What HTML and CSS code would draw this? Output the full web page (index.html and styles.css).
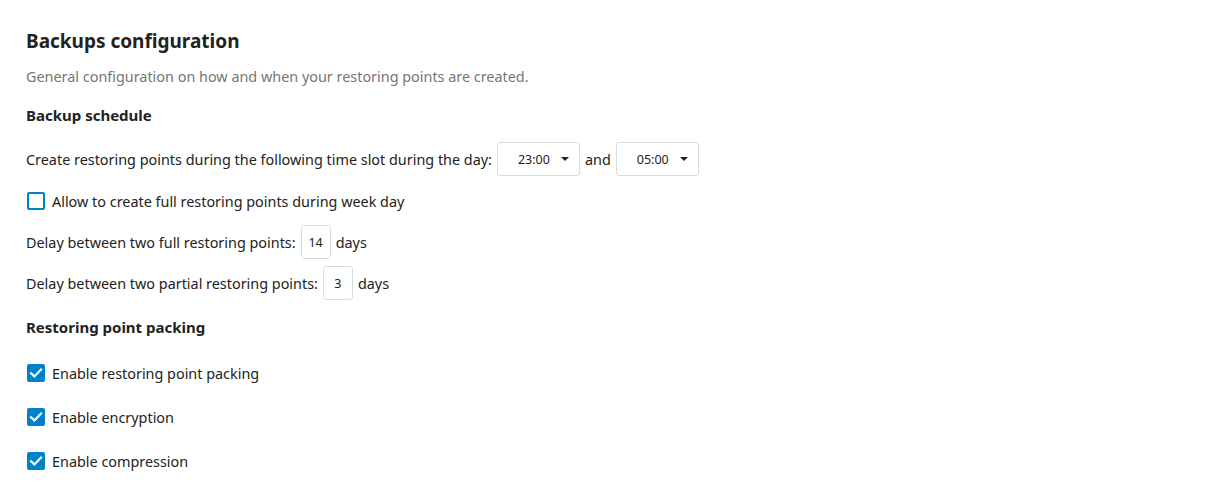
FILE: index.html
```html
<!DOCTYPE html>
<html>
<head>
<meta charset="utf-8">
<link rel="stylesheet" href="styles.css">
</head>
<body>
<div class="section">
  <h2 class="title">Backups configuration</h2>
  <p class="desc">General configuration on how and when your restoring points are created.</p>
  <h3 class="subtitle">Backup schedule</h3>
  <div class="row">
    <span>Create restoring points during the following time slot during the day:</span>
    <span class="select"><span class="val">23:00</span><span class="caret"></span></span>
    <span>and</span>
    <span class="select"><span class="val">05:00</span><span class="caret"></span></span>
  </div>
  <label class="check-row">
    <span class="box"></span>
    <span>Allow to create full restoring points during week day</span>
  </label>
  <div class="row">
    <span>Delay between two full restoring points:</span>
    <span class="num">14</span>
    <span>days</span>
  </div>
  <div class="row">
    <span>Delay between two partial restoring points:</span>
    <span class="num">3</span>
    <span>days</span>
  </div>
  <h3 class="subtitle sub2">Restoring point packing</h3>
  <label class="check-row checked-row">
    <span class="box checked"><svg viewBox="0 0 18 18" width="18" height="18"><path d="M4 9.2 L7.4 12.4 L14 5.6" fill="none" stroke="#fff" stroke-width="2.2" stroke-linecap="square"/></svg></span>
    <span>Enable restoring point packing</span>
  </label>
  <label class="check-row checked-row">
    <span class="box checked"><svg viewBox="0 0 18 18" width="18" height="18"><path d="M4 9.2 L7.4 12.4 L14 5.6" fill="none" stroke="#fff" stroke-width="2.2" stroke-linecap="square"/></svg></span>
    <span>Enable encryption</span>
  </label>
  <label class="check-row checked-row">
    <span class="box checked"><svg viewBox="0 0 18 18" width="18" height="18"><path d="M4 9.2 L7.4 12.4 L14 5.6" fill="none" stroke="#fff" stroke-width="2.2" stroke-linecap="square"/></svg></span>
    <span>Enable compression</span>
  </label>
</div>
</body>
</html>
```
FILE: styles.css
```css
html, body {
  margin: 0;
  padding: 0;
  background: #fff;
}
body {
  font-family: "Noto Sans", "Open Sans", sans-serif;
  font-size: 14.4px;
  color: #222;
}
.section {
  padding: 28px 26px 0 26px;
}
.title {
  margin: 0;
  font-size: 19px;
  font-weight: 700;
  line-height: 26px;
  color: #222;
}
.desc {
  margin: 13px 0 0 0;
  color: #767676;
  font-size: 14.4px;
  line-height: 20px;
}
.subtitle {
  margin: 18px 0 0 0;
  font-size: 15px;
  font-weight: 700;
  line-height: 20px;
}
.sub2 {
  margin-top: 17px;
}
.row {
  display: flex;
  align-items: center;
  gap: 5px;
  margin-top: 7px;
  height: 34px;
}
.row + .row {
  margin-top: 7px;
}
.subtitle + .row {
  margin-top: 17px;
}
.select {
  box-sizing: border-box;
  width: 83px;
  height: 34px;
  border: 1px solid #dbdbdb;
  border-radius: 3px;
  display: flex;
  align-items: center;
  padding-left: 20px;
  font-size: 12.5px;
  position: relative;
}
.caret {
  position: absolute;
  right: 10px;
  top: 14px;
  width: 0;
  height: 0;
  border-left: 4px solid transparent;
  border-right: 4px solid transparent;
  border-top: 4px solid #222;
}
.num {
  box-sizing: border-box;
  width: 30px;
  height: 34px;
  border: 1px solid #dbdbdb;
  border-radius: 3px;
  display: flex;
  align-items: center;
  justify-content: center;
  font-size: 12.5px;
}
.check-row {
  display: flex;
  align-items: center;
  gap: 7px;
  height: 20px;
  margin-top: 15px;
  margin-bottom: 14px;
  padding-left: 1px;
}
.checked-row {
  margin-top: 0;
  margin-bottom: 24px;
}
.sub2 + .checked-row {
  margin-top: 26px;
}
.box {
  box-sizing: border-box;
  width: 18px;
  height: 18px;
  border: 2px solid #0082c9;
  border-radius: 2px;
  display: block;
  flex: none;
}
.box.checked {
  border: none;
  background: #0082c9;
}
.box svg {
  display: block;
}
```
